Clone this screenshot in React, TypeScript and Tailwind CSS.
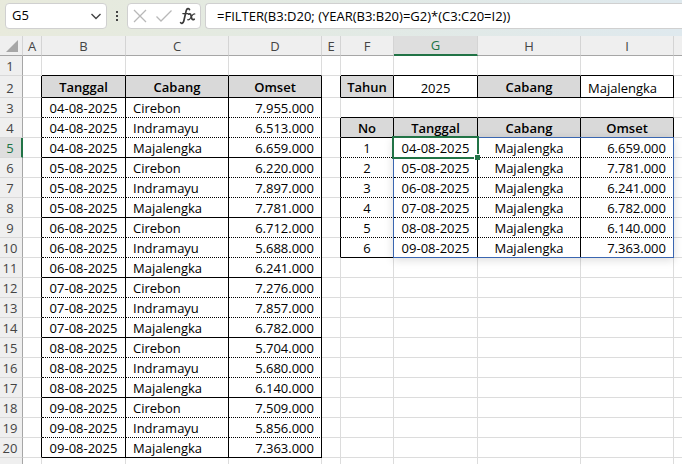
import type { FC, ReactNode } from 'react';
import clsx from 'clsx';

const columns = [
  { name: 'A', width: 'w-[19px]' },
  { name: 'B', width: 'w-[84px]' },
  { name: 'C', width: 'w-[103px]' },
  { name: 'D', width: 'w-[93px]' },
  { name: 'E', width: 'w-[19px]' },
  { name: 'F', width: 'w-[53px]' },
  { name: 'G', width: 'w-[84px]' },
  { name: 'H', width: 'w-[103px]' },
  { name: 'I', width: 'w-[93px]' },
];

const sales = [
  ['04-08-2025', 'Cirebon', '7.955.000'],
  ['04-08-2025', 'Indramayu', '6.513.000'],
  ['04-08-2025', 'Majalengka', '6.659.000'],
  ['05-08-2025', 'Cirebon', '6.220.000'],
  ['05-08-2025', 'Indramayu', '7.897.000'],
  ['05-08-2025', 'Majalengka', '7.781.000'],
  ['06-08-2025', 'Cirebon', '6.712.000'],
  ['06-08-2025', 'Indramayu', '5.688.000'],
  ['06-08-2025', 'Majalengka', '6.241.000'],
  ['07-08-2025', 'Cirebon', '7.276.000'],
  ['07-08-2025', 'Indramayu', '7.857.000'],
  ['07-08-2025', 'Majalengka', '6.782.000'],
  ['08-08-2025', 'Cirebon', '5.704.000'],
  ['08-08-2025', 'Indramayu', '5.680.000'],
  ['08-08-2025', 'Majalengka', '6.140.000'],
  ['09-08-2025', 'Cirebon', '7.509.000'],
  ['09-08-2025', 'Indramayu', '5.856.000'],
  ['09-08-2025', 'Majalengka', '7.363.000'],
];

const filtered = [
  ['1', '04-08-2025', 'Majalengka', '6.659.000'],
  ['2', '05-08-2025', 'Majalengka', '7.781.000'],
  ['3', '06-08-2025', 'Majalengka', '6.241.000'],
  ['4', '07-08-2025', 'Majalengka', '6.782.000'],
  ['5', '08-08-2025', 'Majalengka', '6.140.000'],
  ['6', '09-08-2025', 'Majalengka', '7.363.000'],
];

const cellText = (col: string, row: number): string => {
  const left = 'BCD'.indexOf(col);
  const right = 'FGHI'.indexOf(col);
  if (left >= 0 && row === 2) return ['Tanggal', 'Cabang', 'Omset'][left];
  if (left >= 0) return sales[row - 3]?.[left] ?? '';
  if (right < 0) return '';
  if (row === 2) return ['Tahun', '2025', 'Cabang', 'Majalengka'][right];
  if (row === 4) return ['No', 'Tanggal', 'Cabang', 'Omset'][right];
  return filtered[row - 5]?.[right] ?? '';
};

const isHeading = (col: string, row: number) =>
  (row === 2 && 'BCDFH'.includes(col)) || (row === 4 && 'FGHI'.includes(col));

const rightBorder = (col: string, row: number) => {
  const inSales = 'ABCD'.includes(col) && row >= 2 && row <= 20;
  const inResult =
    'EFGHI'.includes(col) && (row === 2 || (row >= 4 && row <= 10));
  return inSales || inResult ? 'border-r-black' : 'border-r-[#dcdcdc]';
};

const bottomBorder = (col: string, row: number) => {
  const inSales = 'BCD'.includes(col) && row <= 20;
  const inResult = 'FGHI'.includes(col) && row <= 10;
  if (!inSales && !inResult) return 'border-b-[#dcdcdc]';

  const solid = inSales
    ? row <= 2 || row % 3 === 2
    : row <= 4 || row === 10;
  return clsx('border-b-black', !solid && '[border-bottom-style:dotted]');
};

const alignment = (col: string, row: number) => {
  if (isHeading(col, row)) return 'text-center';
  if (col === 'C' || (col === 'I' && row === 2)) return 'pl-[7px] text-left';
  if (col === 'D' || col === 'I') return 'pr-[7px] text-right';
  return 'text-center';
};

const Cell: FC<{ col: string; row: number }> = ({ col, row }) => {
  const heading = isHeading(col, row);
  const active = col === 'G' && row === 5;
  return (
    <td
      className={clsx(
        'border-r border-b',
        heading ? 'bg-[#d9d9d9] align-middle font-semibold' : 'align-bottom',
        active && 'relative',
        rightBorder(col, row),
        bottomBorder(col, row),
        alignment(col, row),
      )}
    >
      {cellText(col, row)}
      {active && (
        <>
          {/* spill range */}
          <div className="pointer-events-none absolute -top-px -left-px h-[121px] w-[281px] border border-[#3a66b0] shadow-[0_2px_9px_rgba(0,0,0,0.14)]" />
          <div className="pointer-events-none absolute -inset-0.5 border-2 border-[#217346]" />
          <div className="pointer-events-none absolute -right-[3px] -bottom-[3px] size-1.5 border-t border-l border-white bg-[#217346]" />
        </>
      )}
    </td>
  );
};

const ToolButton: FC<{ label: string; children: ReactNode }> = ({
  label,
  children,
}) => (
  <button
    type="button"
    aria-label={label}
    className="flex h-full w-6 items-center justify-center"
  >
    {children}
  </button>
);

const FormulaBar = () => (
  <div className="flex h-9 shrink-0 items-start bg-linear-to-r from-[#e8eadc] via-[#e3eae2] via-40% to-[#dfe9ee] pt-[3px] pl-[5px]">
    <div className="flex h-[26px] w-[102px] shrink-0 items-center rounded border border-[#d0d0d0] bg-white pr-1">
      <input
        aria-label="Name Box"
        defaultValue="G5"
        className="w-full min-w-0 pl-1.5 outline-none"
      />
      <button type="button" aria-label="Open name list" className="shrink-0">
        <svg width="12" height="12" viewBox="0 0 12 12" fill="none">
          <path d="M1.5 4L6 8.5L10.5 4" stroke="#444" strokeWidth="1.4" />
        </svg>
      </button>
    </div>
    <svg className="h-[26px] w-5 shrink-0" viewBox="0 0 20 26" fill="#444">
      <rect x="9" y="8" width="2" height="2" />
      <rect x="9" y="12" width="2" height="2" />
      <rect x="9" y="16" width="2" height="2" />
    </svg>
    <div className="flex h-[26px] w-[74px] shrink-0 items-center rounded border border-[#d0d0d0] bg-white">
      <ToolButton label="Cancel">
        <svg width="16" height="16" viewBox="0 0 16 16" fill="none">
          <path d="M2 2L14 14M14 2L2 14" stroke="#b8b8b8" strokeWidth="1.3" />
        </svg>
      </ToolButton>
      <ToolButton label="Enter">
        <svg width="16" height="16" viewBox="0 0 16 16" fill="none">
          <path d="M0.5 8.5L5 13L15.5 2.5" stroke="#b8b8b8" strokeWidth="1.3" />
        </svg>
      </ToolButton>
      <ToolButton label="Insert Function">
        <svg width="18" height="20" viewBox="0 0 18 20" fill="none">
          <g stroke="#3a3a3a" strokeLinecap="round">
            <path
              d="M10.5 3.6C10 2 7.800 2.200 7.200 4.600L4.800 15C4.200 17.400 2.400 17.800 1.600 16.600"
              strokeWidth="1.7"
            />
            <path d="M3.800 7.600H9" strokeWidth="1.2" />
            <path
              d="M9.600 8.200C11.400 7.200 11.800 8.400 12.200 10.200C12.700 12.600 13 14.700 15.200 13.200"
              strokeWidth="1.7"
            />
            <path
              d="M15.800 8C14 7.400 13.200 9.400 12.200 11C11.200 12.800 10.400 14.400 8.600 13.800"
              strokeWidth="1.2"
            />
          </g>
        </svg>
      </ToolButton>
    </div>
    <input
      aria-label="Formula Bar"
      defaultValue="=FILTER(B3:D20; (YEAR(B3:B20)=G2)*(C3:C20=I2))"
      className="ml-1 h-[26px] min-w-0 flex-1 rounded-l border border-r-0 border-[#d0d0d0] bg-white pl-[11px] outline-none"
    />
  </div>
);

const Sheet = () => (
  <table className="w-full table-fixed border-separate border-spacing-0 leading-[18px] [&_td]:py-0 [&_th]:py-0">
    <colgroup>
      <col className="w-[23px]" />
      {columns.map(({ name, width }) => (
        <col key={name} className={width} />
      ))}
      <col />
    </colgroup>
    <thead>
      <tr className="h-5 bg-[#efefef] text-[#444]">
        <th className="border-r border-b border-r-[#d4d4d4] border-b-[#a6a6a6]">
          <svg className="mr-1 ml-auto" width="12" height="12">
            <path d="M12 0V12H0Z" fill="#a6a6a6" />
          </svg>
        </th>
        {columns.map(({ name }) => (
          <th
            key={name}
            scope="col"
            className={clsx(
              'border-r border-r-[#d4d4d4] font-normal',
              name === 'G'
                ? 'border-b-2 border-b-[#217346] bg-[#dedede] text-[#217346]'
                : 'border-b border-b-[#a6a6a6]',
            )}
          >
            {name}
          </th>
        ))}
        <th className="border-b border-b-[#a6a6a6]" />
      </tr>
    </thead>
    <tbody>
      {Array.from({ length: 21 }, (_, i) => i + 1).map((row) => (
        <tr key={row} className={row === 2 ? 'h-[22px]' : 'h-5'}>
          <th
            scope="row"
            className={clsx(
              'border-b border-b-[#d9d9d9] align-bottom font-normal',
              row === 5
                ? 'border-r-2 border-r-[#217346] bg-[#dedede] pr-px text-[#217346]'
                : 'border-r border-r-[#a6a6a6] bg-[#efefef] pr-0.5 text-[#444]',
            )}
          >
            {row <= 20 && row}
          </th>
          {columns.map(({ name }) => (
            <Cell key={name} col={name} row={row} />
          ))}
          <td className="border-b border-b-[#dcdcdc]" />
        </tr>
      ))}
    </tbody>
  </table>
);

export default function App() {
  return (
    <main className="flex h-screen flex-col overflow-hidden bg-white font-['Open_Sans',sans-serif] text-[13px] text-black">
      <FormulaBar />
      <Sheet />
    </main>
  );
}
